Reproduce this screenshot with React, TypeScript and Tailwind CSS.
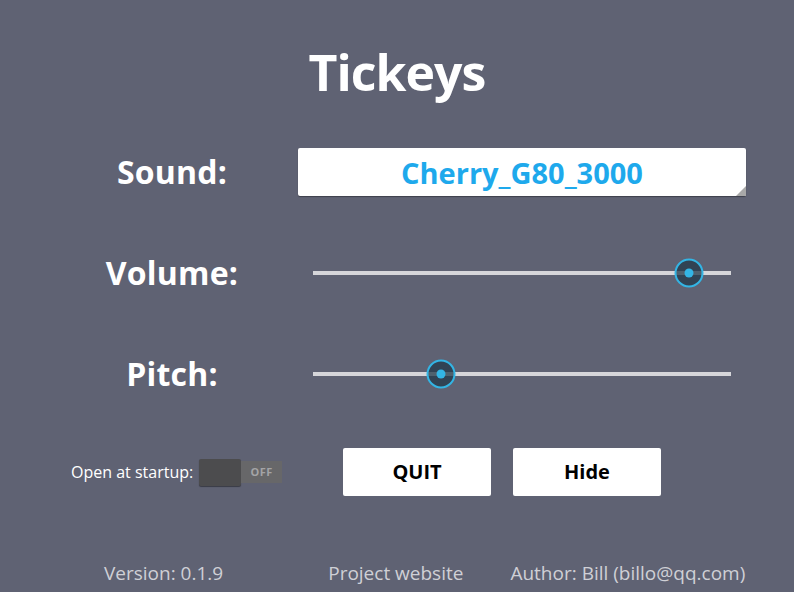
function Slider({ value }: { value: number }) {
  return (
    <div className="relative h-[30px] w-full flex items-center">
      <div className="h-[4px] w-full bg-[#d6d6da]" />
      <div
        className="absolute top-1/2 -translate-x-1/2 -translate-y-1/2 w-[29px] h-[29px] rounded-full border-2 border-[#33b5e5] bg-[#22394a]/75 flex items-center justify-center"
        style={{ left: `${value}%` }}
      >
        <div className="w-[9px] h-[9px] rounded-full bg-[#33b5e5]" />
      </div>
    </div>
  );
}

export default function App() {
  const label = "text-[32px] font-bold text-white tracking-[0.2px] leading-none";
  return (
    <div className="w-full h-[592px] bg-[#5f6273] flex flex-col overflow-hidden" style={{ fontFamily: '"Open Sans", "DejaVu Sans", sans-serif' }}>
      {/* Title */}
      <div className="h-[144px] flex items-center justify-center">
        <h1 className="text-[50px] font-bold text-white leading-none tracking-[-1px]">Tickeys</h1>
      </div>

      {/* Sound */}
      <div className="h-[56px] flex items-center">
        <div className="w-[298px] pl-[46px] flex justify-center">
          <span className={label}>Sound:</span>
        </div>
        <div className="relative w-[448px] h-[48px] bg-white rounded-[2px] shadow-[0_1px_1px_rgba(0,0,0,0.35)] flex items-center justify-center">
          <span className="text-[29px] font-bold text-[#1ea9ec] leading-none">Cherry_G80_3000</span>
          <div className="absolute right-0 bottom-0 w-0 h-0 border-l-[10px] border-l-transparent border-b-[10px] border-b-[#a8a8a8]" />
        </div>
      </div>

      {/* Volume */}
      <div className="mt-[45px] h-[56px] flex items-center">
        <div className="w-[298px] pl-[46px] flex justify-center">
          <span className={label}>Volume:</span>
        </div>
        <div className="w-[448px] px-[15px]">
          <Slider value={90} />
        </div>
      </div>

      {/* Pitch */}
      <div className="mt-[45px] h-[56px] flex items-center">
        <div className="w-[298px] pl-[46px] flex justify-center">
          <span className={label}>Pitch:</span>
        </div>
        <div className="w-[448px] px-[15px]">
          <Slider value={30.7} />
        </div>
      </div>

      {/* Startup + buttons */}
      <div className="mt-[42px] h-[56px] flex items-center">
        <div className="w-[343px] pl-[71px] flex items-center">
          <span className="text-[16px] text-white leading-none">Open at startup:</span>
          <div className="ml-[6px] flex items-center">
            <div className="w-[42px] h-[27px] bg-[#4c4c4e] rounded-[2px] shadow-[0_1px_1px_rgba(0,0,0,0.4)]" />
            <div className="w-[41px] h-[22px] bg-[#676769] flex items-center justify-center">
              <span className="text-[11px] font-bold text-[#a4a4a6] tracking-[0.5px]">OFF</span>
            </div>
          </div>
        </div>
        <button className="w-[148px] h-[48px] bg-white rounded-[2px] text-[20px] font-bold text-black">QUIT</button>
        <button className="ml-[22px] w-[148px] h-[48px] bg-white rounded-[2px] text-[20px] font-bold text-black">Hide</button>
      </div>

      {/* Footer */}
      <div className="mt-[54px] h-[38px] flex items-center text-[19px] text-[#cfd0d6] leading-none">
        <span className="ml-[104px]">Version: 0.1.9</span>
        <span className="ml-[105px]">Project website</span>
        <span className="ml-[47px]">Author: Bill (billo@qq.com)</span>
      </div>
    </div>
  );
}
